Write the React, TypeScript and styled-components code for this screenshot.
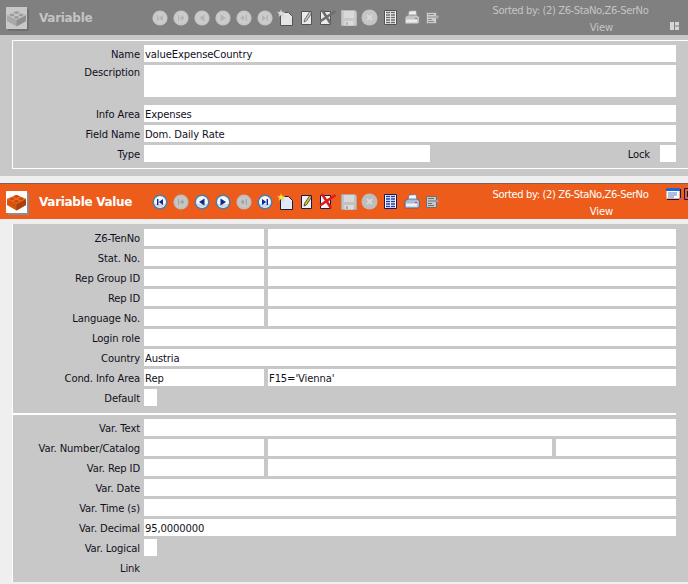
import * as React from 'react';
import { FC } from 'react';
import styled, { createGlobalStyle } from 'styled-components';

const GlobalStyle = createGlobalStyle`
  html, body {
    margin: 0;
    padding: 0;
    background: #efefef;
  }

  body {
    font-family: "DejaVu Sans", Tahoma, sans-serif;
    font-size: 10px;
    letter-spacing: -.12px;
    color: #10101c;
  }
`;

const Page = styled.div`
  width: 688px;
  height: 584px;
  overflow: hidden;
`;

const Header = styled.div<{ $accent?: boolean }>`
  display: flex;
  align-items: center;
  height: 35px;
  margin-top: ${ p => p.$accent ? 7 : 0 }px;
  background: ${ p => p.$accent ? '#ee5c1b' : '#808080' };
  border-top: ${ p => p.$accent ? '1px solid #77655c' : 'none' };
  color: ${ p => p.$accent ? '#fff' : '#c4c4c4' };
  overflow: hidden;
`;

const LogoBox = styled.div<{ $accent?: boolean }>`
  flex: none;
  width: 21px;
  height: 22px;
  margin-left: 6px;
  display: flex;
  align-items: center;
  justify-content: center;
  background: ${ p => p.$accent ? '#fff' : '#c8c8c8' };
  box-shadow: 2px 2px 0 ${ p => p.$accent ? '#8c8c8c' : '#6f6f6f' };
`;

const Title = styled.div`
  flex: none;
  width: 110px;
  margin-left: 12px;
  font-size: 12px;
  font-weight: bold;
  letter-spacing: -.3px;
  white-space: nowrap;
`;

const Toolbar = styled.div<{ $muted?: boolean }>`
  flex: none;
  display: flex;
  align-items: center;
  width: 343px;
  filter: ${ p => p.$muted ? 'grayscale(1) contrast(.6) brightness(1.2)' : 'none' };
`;

const ToolSlot = styled.div`
  flex: none;
  width: 21px;
  height: 20px;
  display: flex;
  align-items: center;
  justify-content: center;
`;

const SortInfo = styled.div`
  flex: none;
  width: 157px;
  display: flex;
  flex-direction: column;
  align-items: center;
  gap: 2px;
  margin-top: 3px;
  letter-spacing: -.4px;
  line-height: 15px;
  white-space: nowrap;
`;

const ViewLabel = styled.div`
  margin-left: 62px;
  letter-spacing: -.1px;
`;

const ViewIcons = styled.div<{ $top: number; $left: number }>`
  flex: none;
  display: flex;
  gap: 3px;
  margin-left: ${ p => p.$left }px;
  align-self: flex-start;
  margin-top: ${ p => p.$top }px;
`;

const TopShell = styled.div`
  background: #c8c8c8;
  padding: 5px 0 7px 12px;
`;

const BottomShell = styled.div`
  padding: 5px 0 0 12px;
`;

const Panel = styled.div<{ $closed?: boolean }>`
  background: #c8c8c8;
  border-left: 1px solid #fff;
  border-top: ${ p => p.$closed ? '1px solid #fff' : 'none' };
  border-bottom: ${ p => p.$closed ? '1px solid #fff' : 'none' };
  padding: ${ p => p.$closed ? '4px 12px 3px 0' : '0 12px 0 0' };
`;

const Section = styled.div<{ $top: number; $bottom: number; $divider?: boolean }>`
  padding: ${ p => p.$top }px 0 ${ p => p.$bottom }px;
  border-top: ${ p => p.$divider ? '2px solid #fff' : 'none' };
`;

const Row = styled.div<{ $after?: number }>`
  display: flex;
  gap: 4px;
  margin-bottom: ${ p => p.$after || 3 }px;
  min-height: 17px;
`;

const Label = styled.div<{ $raised?: boolean }>`
  flex: none;
  width: 127px;
  height: 17px;
  line-height: ${ p => p.$raised ? 15 : 19 }px;
  text-align: right;
  white-space: nowrap;
`;

const Field = styled.div<{ $width?: number; $height?: number }>`
  flex: ${ p => p.$width ? 'none' : '1' };
  width: ${ p => p.$width ? `${ p.$width }px` : 'auto' };
  height: ${ p => p.$height || 17 }px;
  line-height: 19px;
  background: #fff;
  padding-left: 1px;
  box-sizing: border-box;
  white-space: nowrap;
  overflow: hidden;
`;

const Spacer = styled.div`
  flex: 1;
`;

const InlineLabel = styled.div`
  height: 17px;
  line-height: 19px;
  margin-right: 6px;
`;

const NAVY = '#0b2a8c';

const NavButton: FC<{ kind: 'first' | 'pagePrev' | 'prev' | 'next' | 'pageNext' | 'last'; disabled?: boolean }> = ( { kind, disabled } ) =>
{
    const ink = disabled ? '#a5a5a5' : NAVY;
    const glyph: Record<string, React.ReactNode> = {
        first: <path d="M5 5h1.400v6H5zM6.800 8 11 5v6z"/>,
        pagePrev: <path d="M5 5h1.200v6H5zM7 8l3-3v2h1v2h-1v2z"/>,
        prev: <path d="M5 8l5.500-3.600v7.200z"/>,
        next: <path d="M11 8L5.500 4.400v7.200z"/>,
        pageNext: <path d="M9.800 5H11v6H9.800zM9 8L6 5v2H5v2h1v2z"/>,
        last: <path d="M9.600 5H11v6H9.600zM9.200 8 5 5v6z"/>,
    };

    return (
        <svg width="16" height="16" viewBox="0 0 16 16">
            <circle cx="8" cy="8" r="7.600" fill={ disabled ? '#bdbdbd' : '#4f7da3' }/>
            <circle cx="8" cy="8" r="6" fill={ disabled ? '#c6c6c6' : '#f4f8fc' }/>
            { !disabled && <path d="M2.600 10a6 6 0 0 0 10.800 0z" fill="#c6d8ea"/> }
            <g fill={ ink }>{ glyph[ kind ] }</g>
        </svg>
    );
};

const NewIcon: FC = () => (
    <svg width="17" height="17" viewBox="0 0 17 17">
        <path d="M3.500 3.500h8l4 4v9h-12z" fill="#e2e8f8" stroke="#10204a"/>
        <path d="M4 .5l1 2.500 2.700.2-2 1.700.6 2.600L4 6.100 1.700 7.500l.6-2.600-2-1.700L3 3z" fill="#ffe34d" stroke="#d8b000" strokeWidth=".4"/>
    </svg>
);

const EditIcon: FC = () => (
    <svg width="14" height="16" viewBox="0 0 14 16">
        <path d="M1.500 1.500h10v13h-10z" fill="#eef2fb" stroke="#10204a"/>
        <path d="M4 12l.6-2.600L9.800 1.500l2 1.300-5.300 8z" fill="#e8c020" stroke="#111" strokeWidth=".7"/>
    </svg>
);

const DeleteIcon: FC = () => (
    <svg width="17" height="17" viewBox="0 0 17 17">
        <path d="M1.500 2.500h10v13h-10z" fill="#eef2fb" stroke="#10204a"/>
        <path d="M3 1 12 15M16.500 2 1 12.500" stroke="#e01818" strokeWidth="2.600" fill="none"/>
    </svg>
);

const SaveIcon: FC = () => (
    <svg width="16" height="16" viewBox="0 0 16 16">
        <path d="M.5.500h13.500l1.500 1.500v13.500H.5z" fill="#c2c2c2" stroke="#a8a8a8"/>
        <path d="M3 1h10v7H3z" fill="#d8d8d8"/>
        <path d="M3.500 11h9v4.500h-9z" fill="#dcdcdc"/>
        <path d="M5 12h2v3H5z" fill="#a8a8a8"/>
    </svg>
);

const CancelIcon: FC = () => (
    <svg width="17" height="17" viewBox="0 0 17 17">
        <circle cx="8.500" cy="8.500" r="8" fill="#bdbdbd"/>
        <path d="M6 6l5 5M11 6l-5 5" stroke="#d8d8d8" strokeWidth="1.800"/>
    </svg>
);

const ListIcon: FC = () => (
    <svg width="13" height="15" viewBox="0 0 13 15">
        <path d="M.5.500h12v14H.5z" fill="#fff" stroke="#0c1a66"/>
        <path d="M2 2.500h9M2 5h9M2 7.500h9M2 10h9M2 12.500h9" stroke="#1c3cb0" strokeWidth="1.300"/>
        <path d="M6.500 2v11" stroke="#fff" strokeWidth=".8"/>
    </svg>
);

const PrintIcon: FC = () => (
    <svg width="16" height="15" viewBox="0 0 16 15">
        <path d="M5 1l7-.5 1 5H4z" fill="#f4f4f8" stroke="#5d6a86" strokeWidth=".7"/>
        <path d="M1 7l3-2h9l2.500 2v5.500l-2 1.500H1z" fill="#a9bcd8" stroke="#47597c" strokeWidth=".7"/>
        <path d="M2 9.500h11v3H2z" fill="#eef1f6"/>
        <path d="M11 8h2v1h-2z" fill="#e04020"/>
    </svg>
);

const ExportIcon: FC = () => (
    <svg width="13" height="13" viewBox="0 0 13 13">
        <path d="M.5 1.500h10v11H.5z" fill="#c8c8c8" stroke="#6e6e6e"/>
        <path d="M2 3.500h6M2 6h7M2 8.500h4M2 10.500h6" stroke="#6e6e6e"/>
        <path d="M8 5h3V3.500L13 6l-2 2.500V7H8z" fill="#9a9a9a"/>
    </svg>
);

// lego brick, seen from above at an angle
const Brick: FC<{ accent?: boolean }> = ( { accent } ) =>
{
    const side = accent ? '#a8420e' : '#8f8f8f';
    const face = accent ? '#d9530f' : '#a9a9a9';
    const top = accent ? '#ee6a1f' : '#c4c4c4';
    const stud = accent ? '#c94c0e' : '#9c9c9c';

    return (
        <svg width="21" height="19" viewBox="0 0 21 19">
            <path d="M1 7 10.500 3 20 7v6l-9.500 5.500L1 13z" fill={ face }/>
            <path d="M10.500 12v6.500L20 13V7z" fill={ side }/>
            <path d="M1 7 10.500 3 20 7l-9.500 5z" fill={ top }/>
            <ellipse cx="10.500" cy="4.600" rx="2.400" ry="1.300" fill={ stud }/>
            <ellipse cx="6" cy="7" rx="2.400" ry="1.300" fill={ stud }/>
            <ellipse cx="15" cy="7" rx="2.400" ry="1.300" fill={ stud }/>
            <ellipse cx="10.500" cy="9.400" rx="2.400" ry="1.300" fill={ stud }/>
        </svg>
    );
};

const WindowIcon: FC = () => (
    <svg width="15" height="12" viewBox="0 0 15 12">
        <path d="M.5.500h13v10H.5z" fill="#fff"/>
        <path d="M0 0h14v3H0z" fill="#2166d8"/>
        <path d="M14 1h1v11H1v-1h13z" fill="#0c1a50"/>
        <path d="M2 5h9M2 7h9M2 9h6" stroke="#5a7fb8"/>
        <path d="M13 10h2v2h-2z" fill="#f0409a"/>
    </svg>
);

const CutIcon: FC = () => (
    <svg width="15" height="12" viewBox="0 0 15 12">
        <path d="M.5.500h14v11H.5z" fill="#ee5c1b" stroke="#0c1a66"/>
        <path d="M3 3h2v6H3z" fill="#0c1a66"/>
    </svg>
);

const LayoutIcon: FC = () => (
    <svg width="9" height="8" viewBox="0 0 9 8">
        <path d="M0 0h9v8H0z" fill="#d6d6d6"/>
        <path d="M4 0h1v8H4zM5 3.500h4v1H5z" fill="#808080"/>
    </svg>
);

const ToolbarIcons: FC<{ muted?: boolean }> = ( { muted } ) => (
    <Toolbar $muted={ muted }>
        <ToolSlot><NavButton kind="first" disabled={ muted }/></ToolSlot>
        <ToolSlot><NavButton kind="pagePrev" disabled/></ToolSlot>
        <ToolSlot><NavButton kind="prev" disabled={ muted }/></ToolSlot>
        <ToolSlot><NavButton kind="next" disabled={ muted }/></ToolSlot>
        <ToolSlot><NavButton kind="pageNext" disabled/></ToolSlot>
        <ToolSlot><NavButton kind="last" disabled={ muted }/></ToolSlot>
        <ToolSlot><NewIcon/></ToolSlot>
        <ToolSlot><EditIcon/></ToolSlot>
        <ToolSlot><DeleteIcon/></ToolSlot>
        <ToolSlot><SaveIcon/></ToolSlot>
        <ToolSlot><CancelIcon/></ToolSlot>
        <ToolSlot><ListIcon/></ToolSlot>
        <ToolSlot><PrintIcon/></ToolSlot>
        <ToolSlot><ExportIcon/></ToolSlot>
    </Toolbar>
);

const FormHeader: FC<{ title: string; accent?: boolean }> = ( { title, accent } ) => (
    <Header $accent={ accent }>
        <LogoBox $accent={ accent }><Brick accent={ accent }/></LogoBox>
        <Title>{ title }</Title>
        <ToolbarIcons muted={ !accent }/>
        <SortInfo>
            <div>Sorted by: (2) Z6-StaNo,Z6-SerNo</div>
            <ViewLabel>View</ViewLabel>
        </SortInfo>
        { accent
            ? <ViewIcons $top={ 4 } $left={ 17 }><WindowIcon/><CutIcon/></ViewIcons>
            : <ViewIcons $top={ 22 } $left={ 21 }><LayoutIcon/></ViewIcons> }
    </Header>
);

const FormRow: FC<{ label: string; after?: number; raised?: boolean; children?: React.ReactNode }> = ( { label, after, raised, children } ) => (
    <Row $after={ after }>
        <Label $raised={ raised }>{ label }</Label>
        { children }
    </Row>
);

const App: FC = () => (
    <Page>
        <GlobalStyle/>
        <FormHeader title="Variable"/>
        <TopShell>
            <Panel $closed>
                <FormRow label="Name"><Field>valueExpenseCountry</Field></FormRow>
                <FormRow label="Description" after={ 8 } raised><Field $height={ 32 }/></FormRow>
                <FormRow label="Info Area"><Field>Expenses</Field></FormRow>
                <FormRow label="Field Name"><Field>Dom. Daily Rate</Field></FormRow>
                <FormRow label="Type">
                    <Field $width={ 286 }/>
                    <Spacer/>
                    <InlineLabel>Lock</InlineLabel>
                    <Field $width={ 16 }/>
                </FormRow>
            </Panel>
        </TopShell>
        <FormHeader title="Variable Value" accent/>
        <BottomShell>
            <Panel>
                <Section $top={ 5 } $bottom={ 4 }>
                    <FormRow label="Z6-TenNo"><Field $width={ 120 }/><Field/></FormRow>
                    <FormRow label="Stat. No."><Field $width={ 120 }/><Field/></FormRow>
                    <FormRow label="Rep Group ID"><Field $width={ 120 }/><Field/></FormRow>
                    <FormRow label="Rep ID"><Field $width={ 120 }/><Field/></FormRow>
                    <FormRow label="Language No."><Field $width={ 120 }/><Field/></FormRow>
                    <FormRow label="Login role"><Field/></FormRow>
                    <FormRow label="Country"><Field>Austria</Field></FormRow>
                    <FormRow label="Cond. Info Area"><Field $width={ 120 }>Rep</Field><Field>F15='Vienna'</Field></FormRow>
                    <FormRow label="Default"><Field $width={ 13 }/></FormRow>
                </Section>
                <Section $top={ 4 } $bottom={ 3 } $divider>
                    <FormRow label="Var. Text"><Field/></FormRow>
                    <FormRow label="Var. Number/Catalog"><Field $width={ 120 }/><Field/><Field $width={ 120 }/></FormRow>
                    <FormRow label="Var. Rep ID"><Field $width={ 120 }/><Field/></FormRow>
                    <FormRow label="Var. Date"><Field/></FormRow>
                    <FormRow label="Var. Time (s)"><Field/></FormRow>
                    <FormRow label="Var. Decimal"><Field>95,0000000</Field></FormRow>
                    <FormRow label="Var. Logical"><Field $width={ 13 }/></FormRow>
                    <FormRow label="Link"/>
                </Section>
            </Panel>
        </BottomShell>
    </Page>
);

export default App;
